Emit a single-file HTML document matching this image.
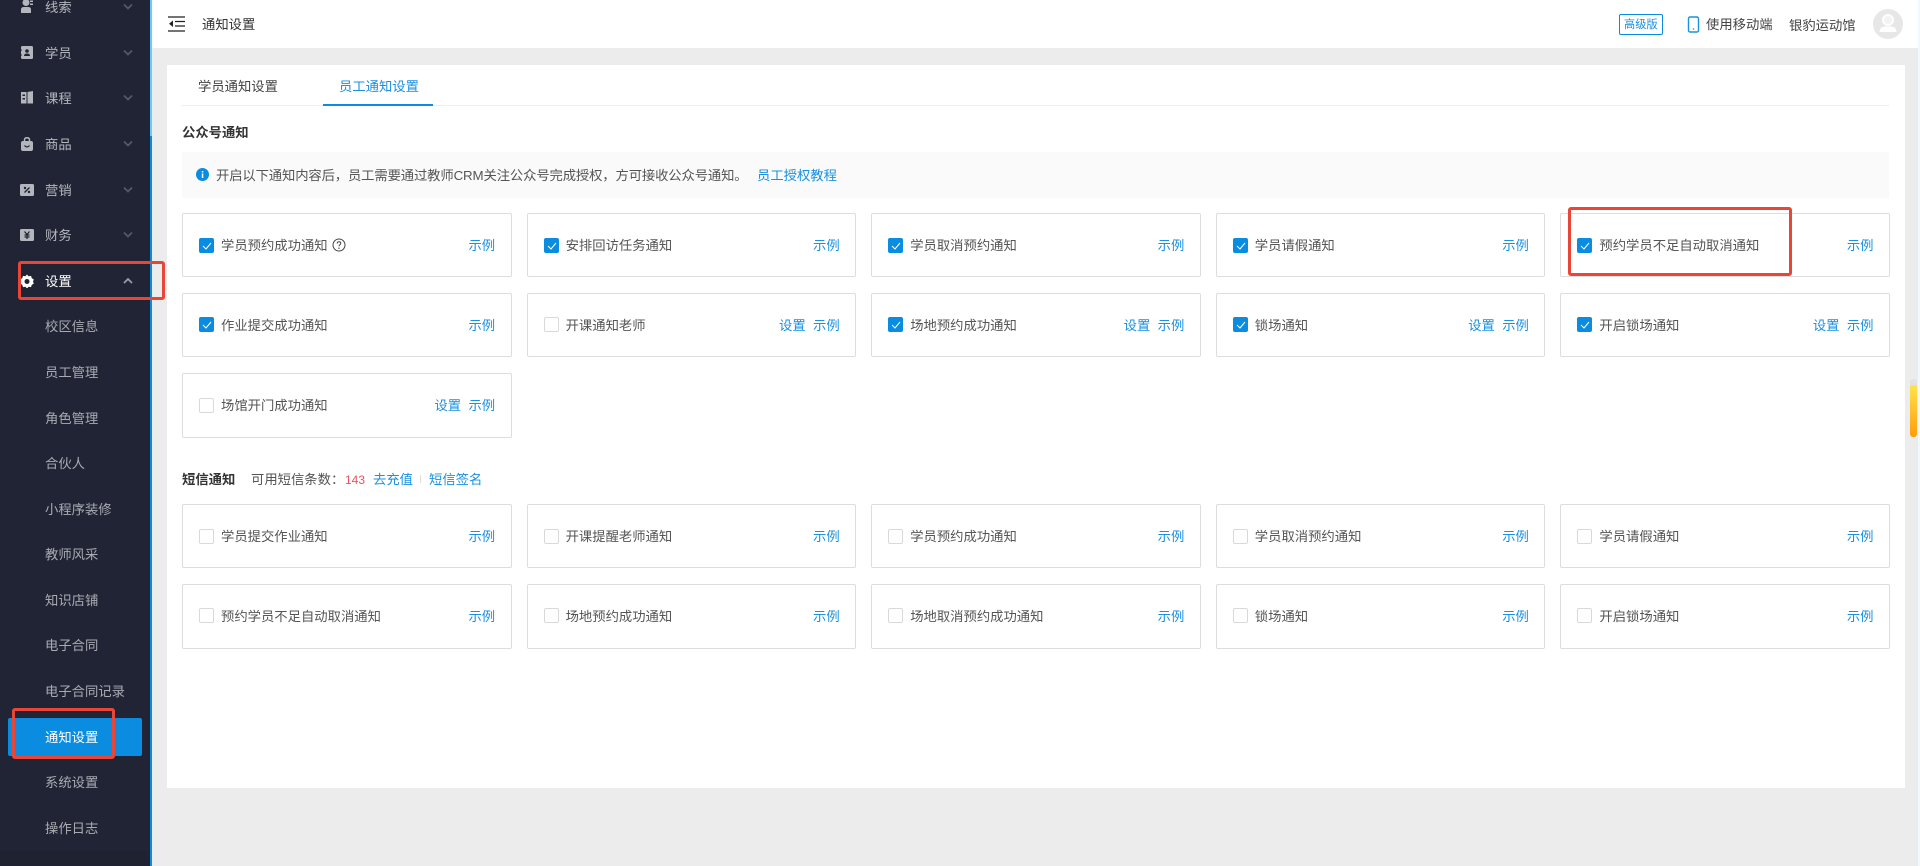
<!DOCTYPE html>
<html lang="zh-CN">
<head>
<meta charset="utf-8">
<title>通知设置</title>
<style>
*{box-sizing:border-box;margin:0;padding:0}
html,body{width:1920px;height:866px;overflow:hidden;background:#ececec;font-family:"Liberation Sans","Noto Sans CJK SC",sans-serif;font-size:13.33px;color:#444}
.abs,.t,.m,.card,.sub,.ico,.ch{position:absolute}
.t{white-space:nowrap;line-height:20px;height:20px}
#side{position:absolute;left:0;top:0;width:150px;height:866px;background:#202435}
#side .foot{position:absolute;left:0;top:851px;width:150px;height:15px;background:#1e2231}
#strip{position:absolute;left:150px;top:0;width:2px;height:866px;background:#0a8ce0}
#strip2{position:absolute;left:150px;top:0;width:2px;height:136px;background:#66ccff}
.m{left:45px;color:#b4b6bd;line-height:20px;height:20px;white-space:nowrap;margin-top:1px}
.sub{left:45px;color:#a9abb2;line-height:20px;height:20px;white-space:nowrap;margin-top:1px}
.ico{left:20px;width:14px;height:14px}
.ch{left:122px;width:12px;height:8px;margin-top:1px}
#active{position:absolute;left:8px;top:718px;width:134px;height:38px;background:#0a8ce0;border-radius:2px}
#head{position:absolute;left:152px;top:0;width:1768px;height:48px;background:#fff}
#main{position:absolute;left:167px;top:65px;width:1738px;height:723px;background:#fff}
.card{width:329.6px;height:64px;background:#fff;border:1px solid #ddd;border-radius:2px}
.box{position:absolute;left:16px;top:24px;width:15px;height:15px;border:1px solid #d9d9d9;border-radius:2px;background:#fff}
.box.on{background:#0a8ce0;border-color:#0a8ce0}
.box.on svg{position:absolute;left:2px;top:2px;width:10px;height:10px}
.lab{position:absolute;left:38px;top:22px;line-height:20px;color:#555;white-space:nowrap}
.l1{position:absolute;right:15.5px;top:22px;line-height:20px;color:#1a90e0;white-space:nowrap}
.l2{position:absolute;right:49.5px;top:22px;line-height:20px;color:#1a90e0;white-space:nowrap}
.red{position:absolute;border:3px solid #ea4638;border-radius:3px;background:transparent}
.c1{left:182px}.c2{left:526.6px}.c3{left:871.2px}.c4{left:1215.8px}.c5{left:1560.4px}
.r1{top:213px}.r2{top:293px}.r3{top:372.5px;height:65px}.r4{top:504px}.r5{top:583.5px;height:65px}
</style>
</head>
<body>
<div id="side">
  <svg class="ico" style="top:-1px" viewBox="0 0 14 14"><circle cx="6" cy="3.5" r="3.5" fill="#b4b6bd"/><path d="M1 14V10.5Q1 8 4 8H8Q11 8 11 10.5V14Z" fill="#b4b6bd"/><rect x="10" y="1.5" width="3" height="1.5" fill="#b4b6bd"/><rect x="10" y="4.5" width="3" height="1.5" fill="#b4b6bd"/></svg>
  <div class="m" style="top:-3px">线索</div>
  <svg class="ch" style="top:2px" viewBox="0 0 12 8"><path d="M2 1.5L6 5.5L10 1.5" fill="none" stroke="#555966" stroke-width="1.8"/></svg>

  <svg class="ico" style="top:46px" viewBox="0 0 14 14"><rect x="1" y="0" width="12" height="13" rx="1.5" fill="#b4b6bd"/><circle cx="7" cy="5" r="1.8" fill="#202435"/><path d="M4 10Q4 7.5 7 7.5T10 10Z" fill="#202435"/><rect x="0" y="3" width="1.5" height="2" fill="#202435"/><rect x="0" y="8" width="1.5" height="2" fill="#202435"/></svg>
  <div class="m" style="top:43px">学员</div>
  <svg class="ch" style="top:48px" viewBox="0 0 12 8"><path d="M2 1.5L6 5.5L10 1.5" fill="none" stroke="#555966" stroke-width="1.8"/></svg>

  <svg class="ico" style="top:91px" viewBox="0 0 14 14"><path d="M1 1H6.5V12.5H1ZM7.5 1L13 0V12.5H7.5Z" fill="#b4b6bd"/><rect x="2.5" y="3.5" width="2.5" height="1.5" fill="#202435"/><rect x="2.5" y="7" width="2.5" height="1.5" fill="#202435"/></svg>
  <div class="m" style="top:88px">课程</div>
  <svg class="ch" style="top:93px" viewBox="0 0 12 8"><path d="M2 1.5L6 5.5L10 1.5" fill="none" stroke="#555966" stroke-width="1.8"/></svg>

  <svg class="ico" style="top:137px" viewBox="0 0 14 14"><rect x="1" y="4" width="12" height="10" rx="2" fill="#b4b6bd"/><path d="M4.5 5V3Q4.5 .8 7 .8T9.5 3V5" fill="none" stroke="#b4b6bd" stroke-width="1.5"/><path d="M4.5 8.5Q7 11.5 9.5 8.5" fill="none" stroke="#202435" stroke-width="1.3"/></svg>
  <div class="m" style="top:134px">商品</div>
  <svg class="ch" style="top:139px" viewBox="0 0 12 8"><path d="M2 1.5L6 5.5L10 1.5" fill="none" stroke="#555966" stroke-width="1.8"/></svg>

  <svg class="ico" style="top:183px" viewBox="0 0 14 14"><rect x="0" y="1" width="14" height="12" rx="1.5" fill="#b4b6bd"/><path d="M4.5 9.5L9.5 4.5" stroke="#202435" stroke-width="1.3"/><circle cx="5" cy="5" r="1.2" fill="#202435"/><circle cx="9" cy="9" r="1.2" fill="#202435"/></svg>
  <div class="m" style="top:180px">营销</div>
  <svg class="ch" style="top:185px" viewBox="0 0 12 8"><path d="M2 1.5L6 5.5L10 1.5" fill="none" stroke="#555966" stroke-width="1.8"/></svg>

  <svg class="ico" style="top:228px" viewBox="0 0 14 14"><rect x="0" y="1" width="14" height="12" rx="1.5" fill="#b4b6bd"/><path d="M4.5 3.5L7 6.5L9.5 3.5M7 6.5V11M4.5 7H9.5M4.5 9H9.5" fill="none" stroke="#202435" stroke-width="1.2"/></svg>
  <div class="m" style="top:225px">财务</div>
  <svg class="ch" style="top:230px" viewBox="0 0 12 8"><path d="M2 1.5L6 5.5L10 1.5" fill="none" stroke="#555966" stroke-width="1.8"/></svg>

  <svg class="ico" style="top:274px" viewBox="0 0 14 14"><path d="M7 0.5L8.6 2.2 11 1.9 11.8 4.2 13.8 5.4 13 7.5 13.8 9.6 11.8 10.8 11 13.1 8.6 12.8 7 14.5 5.4 12.8 3 13.1 2.2 10.8 .2 9.6 1 7.5 .2 5.4 2.2 4.2 3 1.9 5.4 2.2Z" fill="#fff"/><circle cx="7" cy="7.5" r="2.5" fill="#202435"/></svg>
  <div class="m" style="top:271px;color:#fff">设置</div>
  <svg class="ch" style="top:276px" viewBox="0 0 12 8"><path d="M2 6L6 2L10 6" fill="none" stroke="#9a9ca6" stroke-width="1.8"/></svg>

  <div class="sub" style="top:316px">校区信息</div>
  <div class="sub" style="top:362px">员工管理</div>
  <div class="sub" style="top:408px">角色管理</div>
  <div class="sub" style="top:453px">合伙人</div>
  <div class="sub" style="top:499px">小程序装修</div>
  <div class="sub" style="top:544px">教师风采</div>
  <div class="sub" style="top:590px">知识店铺</div>
  <div class="sub" style="top:635px">电子合同</div>
  <div class="sub" style="top:681px">电子合同记录</div>
  <div id="active"></div>
  <div class="sub" style="top:727px;color:#fff">通知设置</div>
  <div class="sub" style="top:772px">系统设置</div>
  <div class="sub" style="top:818px">操作日志</div>
  <div class="foot"></div>
</div>
<div id="strip"></div>
<div id="strip2"></div>

<div id="head"></div>
<svg class="abs" style="left:168px;top:16px;width:17px;height:16px" viewBox="0 0 17 16"><path d="M0 1H17M7 5.500H17M7 10H17M0 15H17" stroke="#222" stroke-width="1.200" fill="none"/><path d="M5 4.500V11L1 7.700Z" fill="#222"/></svg>
<div class="t" style="left:202px;top:15px;color:#333">通知设置</div>

<div class="abs" style="left:1619px;top:14px;width:44px;height:21px;border:1px solid #0a8ce0;border-radius:2px"></div>
<div class="t" style="left:1624px;top:15px;color:#1a90e0;font-size:11.2px">高级版</div>
<svg class="abs" style="left:1687px;top:16px;width:13px;height:17px" viewBox="0 0 13 17"><rect x="1.500" y="1" width="10" height="15" rx="1.500" fill="none" stroke="#1a90e0" stroke-width="1.400"/><circle cx="6.500" cy="13" r=".8" fill="#1a90e0"/></svg>
<div class="t" style="left:1706px;top:15px;color:#444">使用移动端</div>
<div class="t" style="left:1789px;top:16px;color:#444">银豹运动馆</div>
<svg class="abs" style="left:1873px;top:9px;width:30px;height:30px" viewBox="0 0 30 30"><circle cx="15" cy="15" r="15" fill="#e7e7e7"/><circle cx="15" cy="11" r="5" fill="#f3f3f3" stroke="#fff" stroke-width="2"/><path d="M6.500 23Q7 17.500 12 17.500H18Q23 17.500 23.500 23Z" fill="#fff"/></svg>

<div id="main"></div>
<div class="abs" style="left:182px;top:105px;width:1707px;height:1px;background:#eee"></div>
<div class="abs" style="left:323px;top:104px;width:110px;height:2px;background:#0a8ce0"></div>
<div class="t" style="left:198px;top:77px;color:#444">学员通知设置</div>
<div class="t" style="left:339px;top:77px;color:#1a90e0">员工通知设置</div>

<div class="t" style="left:182px;top:123px;color:#333;font-weight:bold">公众号通知</div>
<div class="abs" style="left:182px;top:152px;width:1707px;height:46px;background:#fafafa"></div>
<svg class="abs" style="left:196px;top:168px;width:13px;height:13px" viewBox="0 0 13 13"><circle cx="6.500" cy="6.500" r="6.500" fill="#0a8ce0"/><rect x="5.800" y="5.500" width="1.500" height="4.500" fill="#fff"/><rect x="5.800" y="3" width="1.500" height="1.500" fill="#fff"/></svg>
<div class="t" style="left:216px;top:166px;color:#555;letter-spacing:-.13px">开启以下通知内容后，员工需要通过教师CRM关注公众号完成授权，方可接收公众号通知。</div>
<div class="t" style="left:757px;top:166px;color:#1a90e0">员工授权教程</div>

<div class="card c1 r1"><div class="box on"><svg viewBox="0 0 10 10"><path d="M1 5L4 8L9 2" fill="none" stroke="#fff" stroke-width="1"/></svg></div><div class="lab">学员预约成功通知</div><svg class="abs" style="left:149px;top:24px;width:14px;height:14px" viewBox="0 0 14 14"><circle cx="7" cy="7" r="6" fill="none" stroke="#444" stroke-width="1"/><path d="M5.200 5.500Q5.200 3.800 7 3.800T8.800 5.300Q8.800 6.200 7.800 6.800 7 7.300 7 8.300" fill="none" stroke="#444" stroke-width="1"/><circle cx="7" cy="10.200" r=".7" fill="#444"/></svg><div class="l1">示例</div></div>
<div class="card c2 r1"><div class="box on"><svg viewBox="0 0 10 10"><path d="M1 5L4 8L9 2" fill="none" stroke="#fff" stroke-width="1"/></svg></div><div class="lab">安排回访任务通知</div><div class="l1">示例</div></div>
<div class="card c3 r1"><div class="box on"><svg viewBox="0 0 10 10"><path d="M1 5L4 8L9 2" fill="none" stroke="#fff" stroke-width="1"/></svg></div><div class="lab">学员取消预约通知</div><div class="l1">示例</div></div>
<div class="card c4 r1"><div class="box on"><svg viewBox="0 0 10 10"><path d="M1 5L4 8L9 2" fill="none" stroke="#fff" stroke-width="1"/></svg></div><div class="lab">学员请假通知</div><div class="l1">示例</div></div>
<div class="card c5 r1"><div class="box on"><svg viewBox="0 0 10 10"><path d="M1 5L4 8L9 2" fill="none" stroke="#fff" stroke-width="1"/></svg></div><div class="lab">预约学员不足自动取消通知</div><div class="l1">示例</div></div>

<div class="card c1 r2"><div class="box on" style="top:23px"><svg viewBox="0 0 10 10"><path d="M1 5L4 8L9 2" fill="none" stroke="#fff" stroke-width="1"/></svg></div><div class="lab">作业提交成功通知</div><div class="l1">示例</div></div>
<div class="card c2 r2"><div class="box" style="top:23px"></div><div class="lab">开课通知老师</div><div class="l2">设置</div><div class="l1">示例</div></div>
<div class="card c3 r2"><div class="box on" style="top:23px"><svg viewBox="0 0 10 10"><path d="M1 5L4 8L9 2" fill="none" stroke="#fff" stroke-width="1"/></svg></div><div class="lab">场地预约成功通知</div><div class="l2">设置</div><div class="l1">示例</div></div>
<div class="card c4 r2"><div class="box on" style="top:23px"><svg viewBox="0 0 10 10"><path d="M1 5L4 8L9 2" fill="none" stroke="#fff" stroke-width="1"/></svg></div><div class="lab">锁场通知</div><div class="l2">设置</div><div class="l1">示例</div></div>
<div class="card c5 r2"><div class="box on" style="top:23px"><svg viewBox="0 0 10 10"><path d="M1 5L4 8L9 2" fill="none" stroke="#fff" stroke-width="1"/></svg></div><div class="lab">开启锁场通知</div><div class="l2">设置</div><div class="l1">示例</div></div>

<div class="card c1 r3"><div class="box" style="top:24px"></div><div class="lab">场馆开门成功通知</div><div class="l2">设置</div><div class="l1">示例</div></div>

<div class="t" style="left:182px;top:470px;color:#333;font-weight:bold">短信通知</div>
<div class="t" style="left:251px;top:470px;color:#555">可用短信条数：</div>
<div class="t" style="left:345px;top:470px;color:#f0525c;font-size:12px">143</div>
<div class="t" style="left:373px;top:470px;color:#1a90e0">去充值</div>
<div class="abs" style="left:420px;top:475px;width:1px;height:8px;background:#ddd"></div>
<div class="t" style="left:429px;top:470px;color:#1a90e0">短信签名</div>

<div class="card c1 r4"><div class="box"></div><div class="lab">学员提交作业通知</div><div class="l1">示例</div></div>
<div class="card c2 r4"><div class="box"></div><div class="lab">开课提醒老师通知</div><div class="l1">示例</div></div>
<div class="card c3 r4"><div class="box"></div><div class="lab">学员预约成功通知</div><div class="l1">示例</div></div>
<div class="card c4 r4"><div class="box"></div><div class="lab">学员取消预约通知</div><div class="l1">示例</div></div>
<div class="card c5 r4"><div class="box"></div><div class="lab">学员请假通知</div><div class="l1">示例</div></div>

<div class="card c1 r5"><div class="box" style="top:23px"></div><div class="lab">预约学员不足自动取消通知</div><div class="l1">示例</div></div>
<div class="card c2 r5"><div class="box" style="top:23px"></div><div class="lab">场地预约成功通知</div><div class="l1">示例</div></div>
<div class="card c3 r5"><div class="box" style="top:23px"></div><div class="lab">场地取消预约成功通知</div><div class="l1">示例</div></div>
<div class="card c4 r5"><div class="box" style="top:23px"></div><div class="lab">锁场通知</div><div class="l1">示例</div></div>
<div class="card c5 r5"><div class="box" style="top:23px"></div><div class="lab">开启锁场通知</div><div class="l1">示例</div></div>

<div class="abs" style="left:1910px;top:379px;width:7px;height:6px;background:#e2e2e2;border-radius:3px 3px 0 0"></div>
<div class="abs" style="left:1910px;top:385px;width:7px;height:52px;background:linear-gradient(#ffe44d,#ff9d0a);border-radius:0 0 3px 3px"></div>
<div class="abs" style="left:1918px;top:0;width:2px;height:866px;background:#f2f9fd"></div>

<div class="red" style="left:18px;top:261px;width:147px;height:39px"></div>
<div class="red" style="left:12px;top:708px;width:103px;height:51px"></div>
<div class="red" style="left:1568px;top:207px;width:224px;height:69px"></div>
</body>
</html>
